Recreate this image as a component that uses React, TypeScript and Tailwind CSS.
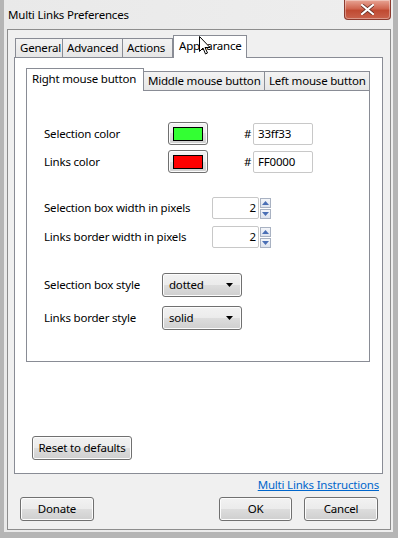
import React from "react";

const btn =
  "border border-[#707070] rounded-[3px] bg-[linear-gradient(#f2f2f2,#ebebeb_50%,#dddddd_50%,#cfcfcf)] shadow-[inset_0_0_0_1px_#fcfcfc] flex items-center justify-center whitespace-nowrap text-black";

function Tab({ label, w, active }: { label: string; w: number; active?: boolean }) {
  return (
    <div
      style={{ width: w }}
      className={
        active
          ? "relative z-10 -mb-px h-[23px] border border-b-0 border-[#898c95] bg-white pl-[5px] pt-[1px] leading-[18px] whitespace-nowrap"
          : "h-[19px] border border-b-0 border-[#898c95] bg-[linear-gradient(#f3f3f3,#e6e6e6)] pl-[4px] leading-[18px] whitespace-nowrap -ml-px first:ml-0"
      }
    >
      {label}
    </div>
  );
}

function ColorRow({ label, color, hex, top }: { label: string; color: string; hex: string; top: string }) {
  return (
    <div className={`flex items-center h-[23px] ${top}`}>
      <div className="w-[124px]">{label}</div>
      <div className={`${btn} w-[40px] h-[23px]`}>
        <div className="w-[30px] h-[14px] border border-black" style={{ background: color }} />
      </div>
      <div className="ml-[36px] w-[9px]">#</div>
      <div className="w-[60px] h-[22px] border border-[#c8c8c8] rounded-[2px] bg-white pl-[4px] leading-[20px]">
        {hex}
      </div>
    </div>
  );
}

function SpinRow({ label, top }: { label: string; top: string }) {
  return (
    <div className={`flex items-center h-[22px] ${top}`}>
      <div className="w-[168px] whitespace-nowrap">{label}</div>
      <div className="w-[47px] h-[22px] border border-[#c8c8c8] rounded-[2px] bg-white text-right pr-[2px] leading-[20px]">
        2
      </div>
      <div className="flex flex-col ml-px gap-px">
        {["up", "down"].map((d) => (
          <div
            key={d}
            className="w-[11px] h-[10px] border border-[#a9b2c2] bg-[linear-gradient(#f4f6fa,#dde3ee)] flex items-center justify-center"
          >
            <svg width="7" height="4" viewBox="0 0 7 4">
              <path d={d === "up" ? "M0 4 L3.5 0 L7 4 Z" : "M0 0 L3.5 4 L7 0 Z"} fill="#4a6fb5" />
            </svg>
          </div>
        ))}
      </div>
    </div>
  );
}

function SelectRow({ label, value, top }: { label: string; value: string; top: string }) {
  return (
    <div className={`flex items-center h-[24px] ${top}`}>
      <div className="w-[118px] whitespace-nowrap">{label}</div>
      <div className={`${btn} !justify-between w-[80px] h-[24px] px-[6px]`}>
        <span>{value}</span>
        <svg width="7" height="4" viewBox="0 0 7 4" className="mr-[2px]">
          <path d="M0 0 L3.5 4 L7 0 Z" fill="#000" />
        </svg>
      </div>
    </div>
  );
}

export default function App() {
  return (
    <div className="relative w-[398px] h-[538px] bg-[#b5b5b5] pl-[4px] pr-[5px] pb-[6px] font-['Noto_Sans',sans-serif] text-[11.5px] tracking-[-0.2px] text-black">
      <div className="h-full bg-[linear-gradient(90deg,#e9e9e9,#eeeeee)] pl-[3px] pr-[2px] pb-[2px] flex flex-col">
        {/* title bar */}
        <div className="h-[29px] flex justify-between items-start">
          <div className="pl-[1px] pt-[6px] leading-[18px]">Multi Links Preferences</div>
          <div className="w-[47px] h-[20px] rounded-b-[4px] border border-t-0 border-[#8b3a2e] bg-[linear-gradient(#e8a595,#d06650_45%,#c04a32_55%,#c9624c)] flex items-center justify-center shadow-[inset_0_0_0_1px_rgba(255,255,255,0.35)]">
            <svg width="13" height="11" viewBox="0 0 13 11">
              <path d="M1 1 L12 10 M12 1 L1 10" stroke="#5d2a22" strokeWidth="3.6" strokeLinecap="square" />
              <path d="M1 1 L12 10 M12 1 L1 10" stroke="#ffffff" strokeWidth="2.2" strokeLinecap="square" />
            </svg>
          </div>
        </div>

        {/* client area */}
        <div className="flex-1 border border-[#8d8d8d] bg-[#f0f0f0] flex flex-col pt-[5px]">
          <div className="flex items-end h-[22px] pl-[7px]">
            <Tab label="General" w={48} />
            <Tab label="Advanced" w={61} />
            <Tab label="Actions" w={51} />
            <Tab label="Appearance" w={74} active />
          </div>
          <div className="ml-[6px] mr-[7px] h-[417px] border border-[#898c95] bg-white flex flex-col pt-[11px] pl-[11px] pr-[12px]">
            <div className="flex items-end h-[21px]">
              <Tab label="Right mouse button" w={118} active />
              <Tab label="Middle mouse button" w={122} />
              <Tab label="Left mouse button" w={106} />
            </div>
            <div className="w-[344px] h-[272px] border border-[#898c95] bg-white pl-[17px] flex flex-col">
              <ColorRow label="Selection color" color="#33ff33" hex="33ff33" top="mt-[31px]" />
              <ColorRow label="Links color" color="#ff0000" hex="FF0000" top="mt-[5px]" />
              <SpinRow label="Selection box width in pixels" top="mt-[24px]" />
              <SpinRow label="Links border width in pixels" top="mt-[7px]" />
              <SelectRow label="Selection box style" value="dotted" top="mt-[25px]" />
              <SelectRow label="Links border style" value="solid" top="mt-[9px]" />
            </div>
            <div className={`${btn} mt-auto mb-[13px] ml-[6px] w-[100px] h-[24px]`}>Reset to defaults</div>
          </div>
          <div className="flex justify-end pr-[11px] mt-[1px] h-[20px] items-center">
            <span className="text-[#0066cc] underline">Multi Links Instructions</span>
          </div>
          <div className="flex items-center px-[12px] mt-[2px]">
            <div className={`${btn} w-[74px] h-[24px]`}>Donate</div>
            <div className={`${btn} ml-auto w-[73px] h-[24px]`}>OK</div>
            <div className={`${btn} ml-[12px] w-[74px] h-[24px]`}>Cancel</div>
          </div>
        </div>
      </div>

      {/* mouse cursor */}
      <svg className="absolute z-20 left-[199px] top-[36px]" width="12" height="19" viewBox="0 0 12 19">
        <path d="M0.5 0.5 L0.5 15.5 L4 12 L6.5 18 L8.5 17 L6 11.5 L11 11.5 Z" fill="#fff" stroke="#000" strokeWidth="1" />
      </svg>
    </div>
  );
}
